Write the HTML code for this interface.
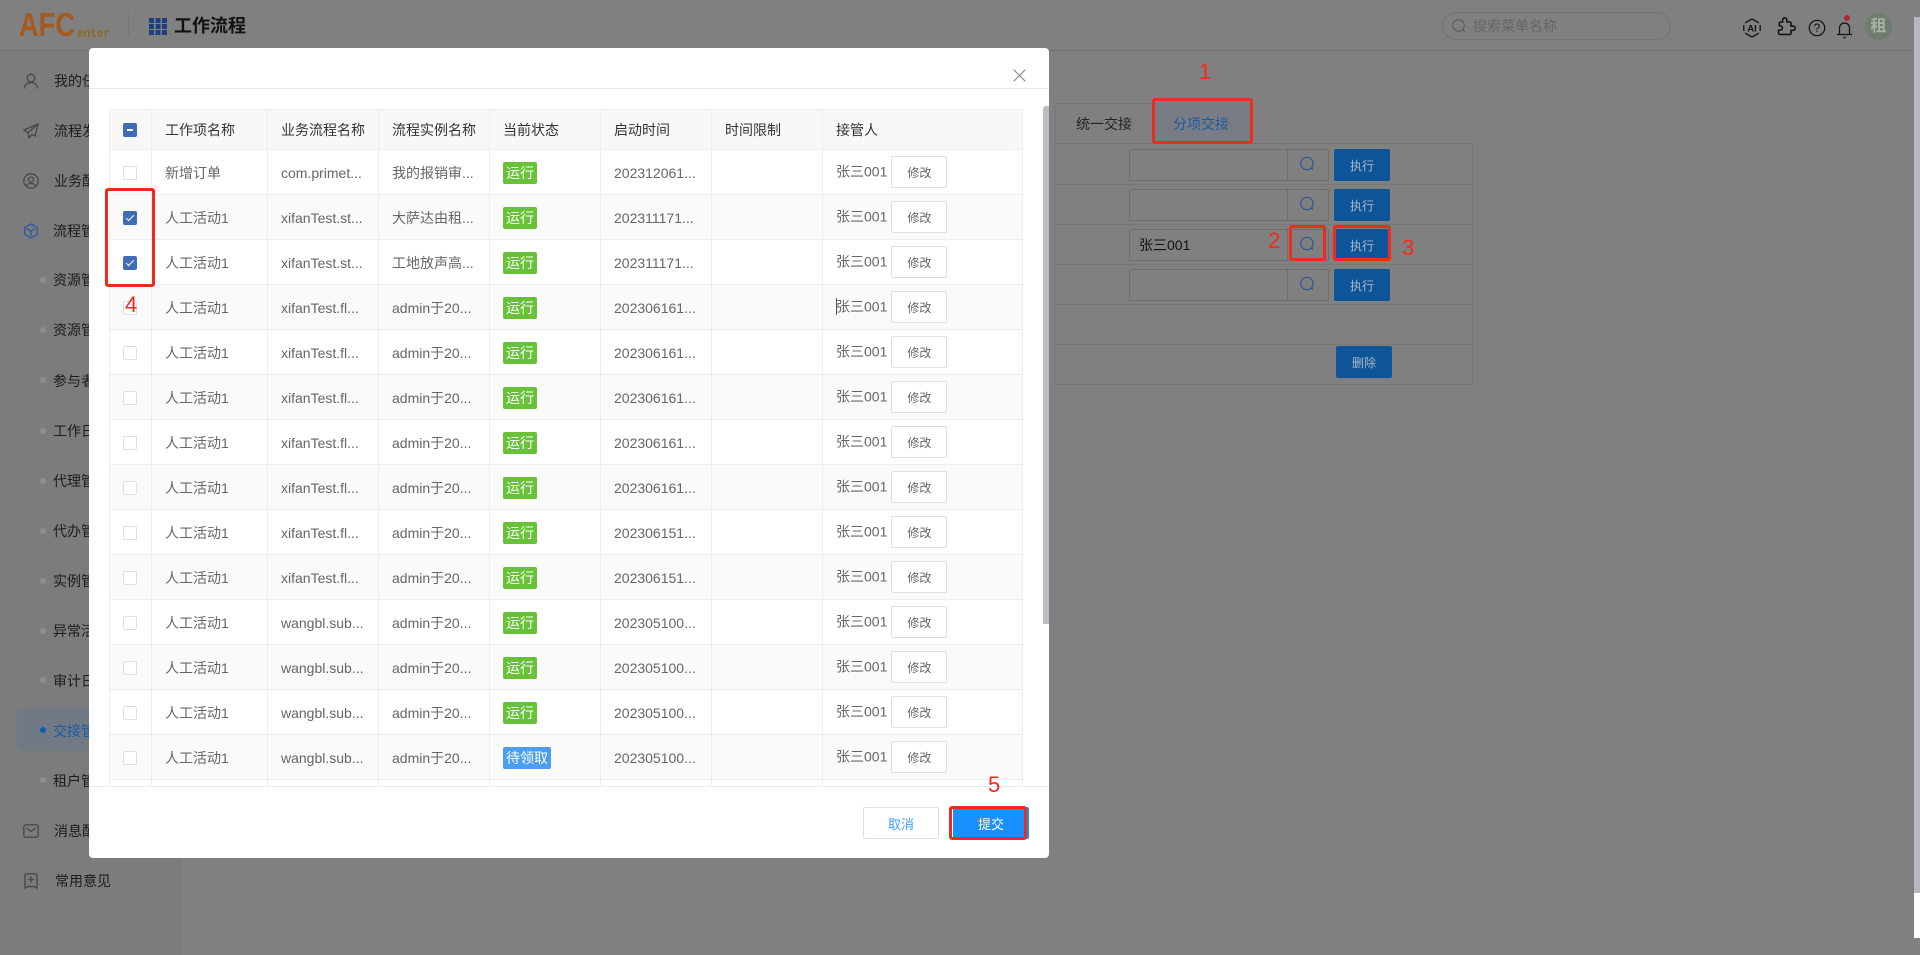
<!DOCTYPE html>
<html lang="zh-CN"><head><meta charset="utf-8"><title>工作流程</title>
<style>
*{box-sizing:border-box}
html,body{margin:0;padding:0;width:1920px;height:955px;overflow:hidden;background:#808080;font-family:"Liberation Sans","Noto Sans CJK SC",sans-serif;font-size:14px}
.a{position:absolute}
.side{left:0;top:51px;width:181px;height:904px;background:#7c7c7c;border-right:1px solid #757575}
.hline{left:0;top:50px;width:1914px;height:1px;background:#727272}
.m{position:absolute;left:54px;color:#1c1c1c;line-height:20px;white-space:nowrap}
.s{left:53px}
.dot{position:absolute;left:40px;width:6px;height:6px;border-radius:50%;background:#8e8e8e}
.tabline{left:1055px;top:143px;width:418px;height:1px;background:#747474}
.rowl{left:1055px;width:418px;height:1px;background:#777}
.inp{left:1129px;width:200px;height:32px;border:1px solid #6e6e6e;border-radius:2px}
.inp i{position:absolute;left:157px;top:0;width:1px;height:30px;background:#6e6e6e}
.bt{left:1334px;width:56px;height:32px;background:#0d5498;border-radius:2px;color:#a9b9c9;font-size:12px;line-height:34px;text-align:center}
.ic{position:absolute;left:1299px;width:16px;height:16px}
.modal{left:89px;top:48px;width:960px;height:810px;background:#fff;border-radius:4px;overflow:hidden}
.mhead{left:0;top:40px;width:960px;height:1px;background:#e8e8ec}
.mfoot{left:0;top:738px;width:960px;height:1px;background:#ebebef}
.body{left:20px;top:61px;width:916px;height:677px;overflow:hidden}
table{border-collapse:collapse;table-layout:fixed;width:914px;position:absolute;left:0;top:0}
th,td{border:1px solid #ebeef5;padding:0 0 0 13px;text-align:left;overflow:hidden;white-space:nowrap;font-weight:normal}
th{height:40px;background:#f8f8f9;color:#333}
td{height:45px;color:#666;padding-top:2px}
tr:nth-child(even) td{background:#fafafa}
th.c,td.c{padding:0;text-align:center}
.cb{display:inline-block;position:relative;left:-1px;top:0;width:14px;height:14px;border:1px solid #dcdfe6;border-radius:2px;background:#fff;vertical-align:middle}
.cb.on{background:#3f6cb8;border-color:#3f6cb8}
.cb.on:after{content:"";position:absolute;left:4px;top:1px;width:3px;height:7px;border:solid #fff;border-width:0 1px 1px 0;transform:rotate(45deg)}
.cb.mi{top:-1px;background:#3f6cb8;border-color:#3f6cb8}
.cb.mi:after{content:"";position:absolute;left:3px;top:5px;width:6px;height:2px;background:#fff}
.tag{display:inline-block;position:relative;top:0;width:34px;height:22px;line-height:22px;border-radius:2px;background:#67c23a;color:#fff;text-align:center;font-size:14px;vertical-align:middle}
.tag.b{width:48px;background:#4a9ff5}
.btn{display:inline-block;position:relative;top:-1px;width:56px;height:32px;line-height:32px;margin-left:4px;border:1px solid #dcdfe6;border-radius:2px;color:#666;background:#fff;font-size:12px;text-align:center;vertical-align:middle}
.red{position:absolute;border:3px solid #ee2c1e;border-radius:3px;z-index:5}
.n{position:absolute;z-index:6;color:#f5281a;font-size:22px;line-height:24px}
</style></head><body>

<!-- header -->
<svg class="a" style="left:10px;top:5px" width="120" height="42">
<text x="9" y="31" font-family="Liberation Sans" font-weight="700" font-size="33" fill="#a5591f" textLength="56" lengthAdjust="spacingAndGlyphs">AFC</text>
<text x="67" y="32" font-family="Liberation Mono" font-weight="700" font-size="13" fill="#8d6a1f" textLength="33" lengthAdjust="spacingAndGlyphs">enter</text>
</svg>
<div class="a" style="left:128px;top:13px;width:1px;height:23px;background:#767676"></div>
<svg class="a" style="left:149px;top:18px" width="18" height="17" fill="#1d3f80">
<rect width="5" height="5"/><rect x="6.5" width="5" height="5"/><rect x="13" width="5" height="5"/>
<rect y="6" width="5" height="5"/><rect x="6.5" y="6" width="5" height="5"/><rect x="13" y="6" width="5" height="5"/>
<rect y="12" width="5" height="5"/><rect x="6.5" y="12" width="5" height="5"/><rect x="13" y="12" width="5" height="5"/></svg>
<div class="a" style="left:174px;top:13px;font-size:18px;line-height:26px;font-weight:700;color:#111">工作流程</div>
<div class="a" style="left:1442px;top:12px;width:229px;height:28px;border:1px solid #747474;border-radius:14px"></div>
<svg class="a" style="left:1451px;top:18px" width="16" height="16" fill="none" stroke="#5e5e5e" stroke-width="1.2"><circle cx="7.5" cy="7.5" r="5.8"/><path d="M11.6 11.6l2.2 2.2"/></svg>
<div class="a" style="left:1473px;top:16px;font-size:14px;line-height:20px;color:#666">搜索菜单名称</div>

<svg class="a" style="left:1742px;top:18px" width="20" height="20" fill="none" stroke="#111" stroke-width="1.3"><path d="M3.2 4.800L10 1l6.800 3.800M18.200 7v6M16.800 15.200L10 19l-6.800-3.800M1.800 13V7"/><text x="10" y="13.500" text-anchor="middle" font-family="Liberation Sans" font-weight="700" font-size="9.500" fill="#111" stroke="none">AI</text></svg>
<svg class="a" style="left:1776px;top:17px" width="20" height="20" viewBox="0 0 24 24" fill="none" stroke="#111" stroke-width="1.900"><path d="M20.500 11H18V7.500a1.500 1.500 0 0 0-1.500-1.500H13V3.500a2.500 2.500 0 0 0-5 0V6H5.500A1.500 1.500 0 0 0 4 7.500V10.500h1a2.700 2.700 0 0 1 0 5.400H3V19a2 2 0 0 0 2 2h11.500a1.500 1.500 0 0 0 1.500-1.500V16h2.500a2.500 2.500 0 0 0 0-5z"/></svg>
<svg class="a" style="left:1808px;top:19px" width="18" height="18" fill="none" stroke="#111" stroke-width="1.200"><circle cx="9" cy="9" r="7.700"/><text x="9" y="13.200" text-anchor="middle" font-family="Liberation Sans" font-size="12" fill="#111" stroke="none">?</text></svg>
<svg class="a" style="left:1836px;top:19px" width="18" height="20" fill="none" stroke="#111" stroke-width="1.200"><path d="M1 15.500h15M3.500 15.500V9a5 5 0 0 1 10 0v6.500"/><path d="M7.500 18.500h2" stroke-width="1.500"/></svg>
<div class="a" style="left:1844px;top:15px;width:6px;height:6px;border-radius:50%;background:#a52a32"></div>
<div class="a" style="left:1865px;top:13px;width:27px;height:27px;border-radius:50%;background:#6e7d6e;color:#a9b2a9;text-align:center;font-size:16px;line-height:27px;font-weight:700">租</div>

<div class="a hline"></div>
<div class="a" style="left:1914px;top:17px;width:6px;height:921px;background:#fff"></div>
<div class="a" style="left:1914px;top:17px;width:6px;height:876px;background:#b7b7bf"></div>

<!-- sidebar -->
<div class="a side"></div>
<div class="a" style="left:17px;top:708px;width:140px;height:43px;background:#717984;border-radius:6px"></div>

<svg class="a" style="left:23px;top:73px" width="16" height="16" fill="none" stroke="#4a4a4a" stroke-width="1.400"><circle cx="8" cy="5" r="3.800"/><path d="M1.500 15.500c0-8 13-8 13 0"/></svg>
<div class="m" style="top:71px">我的任务</div>
<svg class="a" style="left:23px;top:123px" width="16" height="16" fill="none" stroke="#4a4a4a" stroke-width="1.400"><path d="M15 1L1 7l4 2.500 1 5.500 3-3.500 3 1.500zM5 9.500L15 1"/></svg>
<div class="m" style="top:121px">流程发起</div>
<svg class="a" style="left:23px;top:173px" width="16" height="16" fill="none" stroke="#4a4a4a" stroke-width="1.300"><circle cx="8" cy="8" r="7.200"/><circle cx="8" cy="6.500" r="2.500"/><path d="M3.500 13c1.500-3.500 7.500-3.500 9 0"/></svg>
<div class="m" style="top:171px">业务配置</div>
<svg class="a" style="left:23px;top:223px" width="16" height="16" fill="none" stroke="#2e5aa0" stroke-width="1.300"><path d="M8 1l6.300 3.500v7L8 15l-6.300-3.500v-7zM3.500 5.500L8 8l4.500-2.500M8 8v5"/></svg>
<div class="m" style="top:221px;left:53px">流程管理</div>

<div class="dot" style="top:277px"></div><div class="m s" style="top:270px">资源管理</div>
<div class="dot" style="top:327px"></div><div class="m s" style="top:320px">资源管理</div>
<div class="dot" style="top:377px"></div><div class="m s" style="top:371px">参与者管理</div>
<div class="dot" style="top:428px"></div><div class="m s" style="top:421px">工作日历</div>
<div class="dot" style="top:478px"></div><div class="m s" style="top:471px">代理管理</div>
<div class="dot" style="top:528px"></div><div class="m s" style="top:521px">代办管理</div>
<div class="dot" style="top:578px"></div><div class="m s" style="top:571px">实例管理</div>
<div class="dot" style="top:628px"></div><div class="m s" style="top:621px">异常活动</div>
<div class="dot" style="top:677px"></div><div class="m s" style="top:671px">审计日志</div>
<div class="dot" style="top:727px;background:#0f5fb0"></div><div class="m s" style="top:721px;color:#1a5ba8">交接管理</div>
<div class="dot" style="top:777px"></div><div class="m s" style="top:771px">租户管理</div>

<svg class="a" style="left:23px;top:824px" width="16" height="14" fill="none" stroke="#4a4a4a" stroke-width="1.400"><rect x=".8" y=".8" width="14.400" height="12.400" rx="2"/><path d="M3.500 4l4.500 3.500L12.500 4"/></svg>
<div class="m" style="top:821px">消息配置</div>
<svg class="a" style="left:24px;top:873px" width="14" height="16" fill="none" stroke="#4a4a4a" stroke-width="1.400"><path d="M1 2.200A1.400 1.400 0 0 1 2.400.8h9.200A1.400 1.400 0 0 1 13 2.200V15l-3-1.500H4L1 15z"/><path d="M7 3.500v6M4 6.500h6"/></svg>
<div class="m" style="top:871px;left:55px">常用意见</div>

<!-- main content -->
<div class="a" style="left:1055px;top:103px;width:98px;height:41px;border:1px solid #757575;border-bottom:0;border-right:0;border-radius:4px 0 0 0"></div>
<div class="a" style="left:1153px;top:99px;width:99px;height:44px;background:#797c85"></div>
<div class="a tabline"></div>
<div class="a" style="left:1055px;top:143px;width:1px;height:242px;background:#777"></div>
<div class="a" style="left:1472px;top:143px;width:1px;height:242px;background:#777"></div>
<div class="a rowl" style="top:184px"></div><div class="a rowl" style="top:224px"></div><div class="a rowl" style="top:264px"></div><div class="a rowl" style="top:304px"></div><div class="a rowl" style="top:344px"></div><div class="a rowl" style="top:384px"></div>
<div class="a" style="left:1076px;top:114px;line-height:20px;color:#222">统一交接</div>
<div class="a" style="left:1173px;top:114px;line-height:20px;color:#1f5b9e">分项交接</div>

<div class="a inp" style="top:149px"><i></i></div>
<div class="a inp" style="top:189px"><i></i></div>
<div class="a inp" style="top:229px"><i></i></div>
<div class="a inp" style="top:269px"><i></i></div>
<div class="a" style="left:1139px;top:235px;line-height:20px;color:#111">张三001</div>
<svg class="ic" style="top:156px" fill="none" stroke="#2f5590" stroke-width="1.200"><circle cx="8" cy="7.500" r="6.200"/><path d="M12.300 12l2 2"/></svg>
<svg class="ic" style="top:196px" fill="none" stroke="#2f5590" stroke-width="1.200"><circle cx="8" cy="7.500" r="6.200"/><path d="M12.300 12l2 2"/></svg>
<svg class="ic" style="top:236px" fill="none" stroke="#2f5590" stroke-width="1.200"><circle cx="8" cy="7.500" r="6.200"/><path d="M12.300 12l2 2"/></svg>
<svg class="ic" style="top:276px" fill="none" stroke="#2f5590" stroke-width="1.200"><circle cx="8" cy="7.500" r="6.200"/><path d="M12.300 12l2 2"/></svg>
<div class="a bt" style="top:149px">执行</div>
<div class="a bt" style="top:189px">执行</div>
<div class="a bt" style="top:229px">执行</div>
<div class="a bt" style="top:269px">执行</div>
<div class="a bt" style="top:346px;left:1336px">删除</div>

<!-- modal -->
<div class="a modal">
<div class="a mhead"></div>
<svg class="a" style="left:924px;top:21px" width="13" height="13" fill="none" stroke="#8a8a8a" stroke-width="1.100"><path d="M.7.700l11.600 11.600M12.300.700L.7 12.300"/></svg>
<div class="a body">
<table>
<colgroup><col style="width:42px"><col style="width:116px"><col style="width:111px"><col style="width:111px"><col style="width:111px"><col style="width:111px"><col style="width:111px"><col style="width:200px"></colgroup>
<thead><tr><th class="c"><span class="cb mi"></span></th><th>工作项名称</th><th>业务流程名称</th><th>流程实例名称</th><th>当前状态</th><th>启动时间</th><th>时间限制</th><th>接管人</th></tr></thead>
<tbody>
<tr><td class="c"><span class="cb"></span></td><td>新增订单</td><td>com.primet...</td><td>我的报销审...</td><td><span class="tag">运行</span></td><td>202312061...</td><td></td><td>张三001<span class="btn">修改</span></td></tr>
<tr><td class="c"><span class="cb on"></span></td><td>人工活动1</td><td>xifanTest.st...</td><td>大萨达由租...</td><td><span class="tag">运行</span></td><td>202311171...</td><td></td><td>张三001<span class="btn">修改</span></td></tr>
<tr><td class="c"><span class="cb on"></span></td><td>人工活动1</td><td>xifanTest.st...</td><td>工地放声高...</td><td><span class="tag">运行</span></td><td>202311171...</td><td></td><td>张三001<span class="btn">修改</span></td></tr>
<tr><td class="c"><span class="cb"></span></td><td>人工活动1</td><td>xifanTest.fl...</td><td>admin于20...</td><td><span class="tag">运行</span></td><td>202306161...</td><td></td><td>张三001<span class="btn">修改</span></td></tr>
<tr><td class="c"><span class="cb"></span></td><td>人工活动1</td><td>xifanTest.fl...</td><td>admin于20...</td><td><span class="tag">运行</span></td><td>202306161...</td><td></td><td>张三001<span class="btn">修改</span></td></tr>
<tr><td class="c"><span class="cb"></span></td><td>人工活动1</td><td>xifanTest.fl...</td><td>admin于20...</td><td><span class="tag">运行</span></td><td>202306161...</td><td></td><td>张三001<span class="btn">修改</span></td></tr>
<tr><td class="c"><span class="cb"></span></td><td>人工活动1</td><td>xifanTest.fl...</td><td>admin于20...</td><td><span class="tag">运行</span></td><td>202306161...</td><td></td><td>张三001<span class="btn">修改</span></td></tr>
<tr><td class="c"><span class="cb"></span></td><td>人工活动1</td><td>xifanTest.fl...</td><td>admin于20...</td><td><span class="tag">运行</span></td><td>202306161...</td><td></td><td>张三001<span class="btn">修改</span></td></tr>
<tr><td class="c"><span class="cb"></span></td><td>人工活动1</td><td>xifanTest.fl...</td><td>admin于20...</td><td><span class="tag">运行</span></td><td>202306151...</td><td></td><td>张三001<span class="btn">修改</span></td></tr>
<tr><td class="c"><span class="cb"></span></td><td>人工活动1</td><td>xifanTest.fl...</td><td>admin于20...</td><td><span class="tag">运行</span></td><td>202306151...</td><td></td><td>张三001<span class="btn">修改</span></td></tr>
<tr><td class="c"><span class="cb"></span></td><td>人工活动1</td><td>wangbl.sub...</td><td>admin于20...</td><td><span class="tag">运行</span></td><td>202305100...</td><td></td><td>张三001<span class="btn">修改</span></td></tr>
<tr><td class="c"><span class="cb"></span></td><td>人工活动1</td><td>wangbl.sub...</td><td>admin于20...</td><td><span class="tag">运行</span></td><td>202305100...</td><td></td><td>张三001<span class="btn">修改</span></td></tr>
<tr><td class="c"><span class="cb"></span></td><td>人工活动1</td><td>wangbl.sub...</td><td>admin于20...</td><td><span class="tag">运行</span></td><td>202305100...</td><td></td><td>张三001<span class="btn">修改</span></td></tr>
<tr><td class="c"><span class="cb"></span></td><td>人工活动1</td><td>wangbl.sub...</td><td>admin于20...</td><td><span class="tag b">待领取</span></td><td>202305100...</td><td></td><td>张三001<span class="btn">修改</span></td></tr>
<tr><td class="c"></td><td></td><td></td><td></td><td></td><td></td><td></td><td></td></tr>
</tbody></table>
</div>
<div class="a" style="left:747px;top:250px;width:1px;height:17px;background:#555"></div>
<div class="a" style="left:954px;top:58px;width:6px;height:518px;border-radius:3px 0 0 0;background:#bcbcc4"></div>
<div class="a mfoot"></div>
<div class="a" style="left:774px;top:759px;width:76px;height:32px;border:1px solid #dcdfe6;border-radius:2px;color:#409eff;font-size:13px;line-height:33px;text-align:center">取消</div>
<div class="a" style="left:864px;top:759px;width:76px;height:32px;background:#1890ff;border-radius:2px;color:#fff;font-size:13px;line-height:35px;text-align:center">提交</div>
</div>

<!-- annotations -->
<div class="red" style="left:1152px;top:98px;width:101px;height:46px"></div>
<div class="red" style="left:1289px;top:225px;width:37px;height:36px"></div>
<div class="red" style="left:1333px;top:225px;width:58px;height:36px"></div>
<div class="red" style="left:105px;top:188px;width:50px;height:99px"></div>
<div class="red" style="left:949px;top:806px;width:78px;height:34px"></div>
<div class="n" style="left:1199px;top:60px">1</div>
<div class="n" style="left:1268px;top:229px">2</div>
<div class="n" style="left:1402px;top:236px">3</div>
<div class="n" style="left:125px;top:293px">4</div>
<div class="n" style="left:988px;top:773px">5</div>
</body></html>
